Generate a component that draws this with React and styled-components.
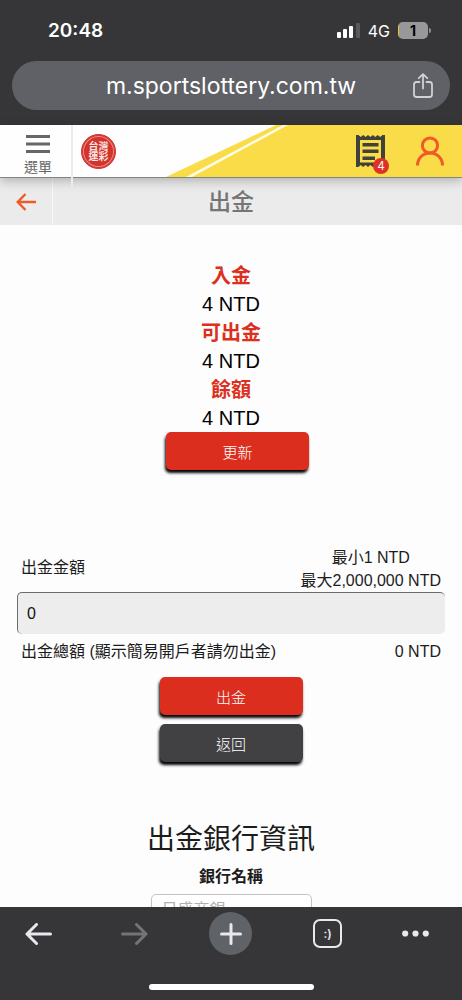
import React, { useState } from 'react';
import styled, { createGlobalStyle } from 'styled-components';

const GlobalStyle = createGlobalStyle`
  * {
    box-sizing: border-box;
  }
  body {
    margin: 0;
    background-color: #fdfdfd;
    font-family: 'Liberation Sans', 'Noto Sans CJK TC', sans-serif;
  }
  button,
  input {
    font-family: inherit;
  }
  svg {
    display: block;
  }
`;

const Screen = styled.div`
  display: flex;
  flex-direction: column;
  height: 100vh;
`;

/* browser chrome, top */

const BrowserTop = styled.header`
  flex-shrink: 0;
  padding: 0 12px 15px;
  background-color: #363638;
  color: #fff;
  font-family: Inter, sans-serif;
`;

const StatusBar = styled.div`
  display: flex;
  justify-content: space-between;
  align-items: center;
  height: 61px;
  padding: 0 19px 0 36px;
`;

const Clock = styled.time`
  font-size: 19px;
  font-weight: 600;
`;

const StatusIcons = styled.div`
  display: flex;
  align-items: center;
  gap: 8px;
  font-size: 16px;
`;

const Battery = styled.div`
  display: flex;
  align-items: center;
  gap: 1px;
  &::after {
    content: '';
    width: 2px;
    height: 5px;
    border-radius: 0 2px 2px 0;
    background-color: #8e8e90;
  }
`;

const BatteryLevel = styled.span`
  width: 30px;
  border-radius: 5px;
  background: linear-gradient(to right, #e8c93a 1px, #98989a 1px);
  color: #000;
  font-size: 14px;
  font-weight: 700;
  line-height: 17px;
  text-align: center;
`;

const AddressBar = styled.div`
  display: grid;
  grid-template-columns: 36px 1fr 36px;
  align-items: center;
  height: 49px;
  padding: 0 9px;
  border-radius: 25px;
  background-color: #5f6166;
`;

const Address = styled.span`
  grid-column: 2;
  font-size: 23px;
  line-height: 28px;
  text-align: center;
`;

const IconButton = styled.button`
  display: flex;
  justify-content: center;
  align-items: center;
  padding: 0;
  border: 0;
  background: none;
  color: inherit;
  cursor: pointer;
`;

/* site header */

const SiteHeader = styled.header`
  position: relative;
  z-index: 1;
  flex-shrink: 0;
  display: flex;
  align-items: center;
  height: 53px;
  border-bottom: 1px solid #85857f;
  background-color: #fefefe;
  box-shadow: 0 3px 10px rgba(0, 0, 0, 0.25);
`;

const Stripes = styled.svg`
  position: absolute;
  top: 0;
  right: 0;
  z-index: -1;
`;

const MenuButton = styled.button`
  display: flex;
  flex-direction: column;
  align-items: center;
  align-self: stretch;
  width: 73px;
  padding: 10px 0 0 3px;
  border: 0;
  background: none;
  color: #666;
  font-size: 14px;
  line-height: 20px;
  cursor: pointer;
  /* divider hangs a little below the header */
  &::after {
    content: '';
    position: absolute;
    top: 0;
    left: 71px;
    width: 2px;
    height: 62px;
    background-color: #ececec;
  }
`;

const MenuLabel = styled.span`
  margin-top: 4px;
`;

const LogoLink = styled.a`
  display: flex;
  justify-content: center;
  align-items: center;
  width: 35px;
  height: 35px;
  margin-left: 8px;
  border: 1px solid #d2332c;
  border-radius: 50%;
  background-color: #d2332c;
  box-shadow: inset 0 0 0 1px #d2332c, inset 0 0 0 2px #e98a84;
  color: #fbe6e3;
  text-decoration: none;
`;

const LogoText = styled.span`
  width: 20px;
  font-family: 'Noto Sans CJK TC', sans-serif;
  font-size: 10px;
  font-weight: 700;
  line-height: 10px;
  word-break: break-all;
`;

const HeaderActions = styled.div`
  display: flex;
  align-items: center;
  gap: 30px;
  margin-left: auto;
  padding-right: 17px;
`;

const BetSlip = styled(IconButton)`
  position: relative;
`;

const Badge = styled.span`
  position: absolute;
  right: -4px;
  bottom: -7px;
  width: 16px;
  height: 16px;
  border-radius: 50%;
  background-color: #de3226;
  color: #fff;
  font-size: 12px;
  line-height: 16px;
  text-align: center;
`;

const TitleBar = styled.div`
  flex-shrink: 0;
  display: grid;
  grid-template-columns: 53px 1fr 53px;
  align-items: stretch;
  height: 47px;
  background-color: #ebebeb;
`;

const BackButton = styled(IconButton)`
  border-right: 1px solid #f8f8f8;
  color: #f05a28;
`;

const PageTitle = styled.h1`
  margin: 0;
  color: #757575;
  font-size: 23px;
  font-weight: 500;
  line-height: 48px;
  text-align: center;
`;

/* page */

const Page = styled.main`
  flex: 1;
  min-height: 0;
  overflow-y: auto;
  scrollbar-width: none;
  padding: 36px 17px 0;
  color: #1c1c1c;
`;

const Balances = styled.dl`
  margin: 0;
  font-size: 20px;
  text-align: center;
`;

const BalanceName = styled.dt`
  color: #dc2f20;
  font-weight: 700;
  line-height: 31px;
`;

const BalanceValue = styled.dd`
  margin: 0;
  padding-bottom: 2px;
  color: #000;
  line-height: 24px;
`;

const Button = styled.button`
  width: 143px;
  height: 38px;
  padding: 0;
  border: 0;
  border-radius: 5px;
  background-color: ${(props) => (props.$dark ? '#414042' : '#dc2e1e')};
  box-shadow: -1px 3px 3px #000;
  color: #fff;
  font-size: 15px;
  font-weight: 300;
  cursor: pointer;
`;

const RefreshRow = styled.div`
  display: flex;
  justify-content: center;
  padding-left: 13px;
`;

const Form = styled.form`
  margin-top: 76px;
  font-size: 16px;
`;

const FormRow = styled.div`
  display: flex;
  justify-content: space-between;
  align-items: center;
  padding: 0 4px;
  line-height: 23px;
`;

const AmountLabel = styled.label`
  padding-bottom: 4px;
`;

const Limits = styled.div`
  text-align: center;
`;

const AmountInput = styled.input`
  display: block;
  width: 100%;
  height: 42px;
  margin: 0 0 6px;
  padding: 0 9px;
  border: solid #6b6b6b;
  border-width: 1px 0 0 1px;
  border-radius: 5px;
  background-color: #ededed;
  color: #111;
  font-size: 16px;
  outline: none;
`;

const FormActions = styled.div`
  display: flex;
  flex-direction: column;
  align-items: center;
  gap: 9px;
  margin-top: 14px;
`;

const BankInfo = styled.section`
  display: flex;
  flex-direction: column;
  align-items: center;
  margin-top: 58px;
`;

const BankTitle = styled.h2`
  margin: 0;
  font-size: 28px;
  font-weight: 400;
  line-height: 40px;
`;

const BankLabel = styled.label`
  margin: 5px 0;
  font-size: 16px;
  font-weight: 700;
  line-height: 24px;
`;

const BankInput = styled.input`
  flex-shrink: 0;
  width: 161px;
  height: 27px;
  padding: 0 10px;
  border: 1px solid #c4c4c4;
  border-radius: 5px;
  background-color: #fff;
  color: #b0b0b0;
  font-size: 16px;
`;

/* browser chrome, bottom */

const BrowserBottom = styled.footer`
  flex-shrink: 0;
  display: flex;
  flex-direction: column;
  justify-content: space-between;
  height: 93px;
  padding: 5px 0 10px;
  background-color: #363638;
  color: #e8e8ee;
`;

const Toolbar = styled.nav`
  display: grid;
  grid-template-columns: 86px repeat(3, 1fr) 86px;
  align-items: center;
`;

const ToolButton = styled(IconButton)`
  height: 43px;
  padding-right: ${(props) => props.$inset || 0}px;
  &:disabled {
    color: #747476;
    cursor: default;
  }
`;

const PlusCircle = styled.span`
  display: flex;
  justify-content: center;
  align-items: center;
  width: 43px;
  height: 43px;
  border-radius: 50%;
  background-color: #5f6367;
`;

const TabCount = styled.span`
  width: 29px;
  height: 29px;
  border: 2px solid currentColor;
  border-radius: 7px;
  font-family: Inter, sans-serif;
  font-size: 12px;
  font-weight: 600;
  line-height: 25px;
  text-align: center;
`;

const HomeIndicator = styled.div`
  align-self: center;
  width: 165px;
  height: 6px;
  border-radius: 3px;
  background-color: #fff;
`;

const SignalIcon = () => (
  <svg width="23" height="15" viewBox="0 0 23 15" fill="#fff" aria-hidden="true">
    <rect x="0" y="9" width="4" height="6" rx="1" />
    <rect x="6" y="6" width="4" height="9" rx="1" />
    <rect x="12" y="3" width="4" height="12" rx="1" />
    <rect x="19" y="0" width="4" height="15" rx="1" fill="#59595b" />
  </svg>
);

const ShareIcon = () => (
  <svg width="20" height="25" viewBox="0 0 20 25" fill="none" stroke="#d0d1d6" strokeWidth="1.8" strokeLinecap="round" strokeLinejoin="round">
    <path d="M6.5 9H3.5Q1 9 1 11.5V21.5Q1 24 3.5 24H16.5Q19 24 19 21.5V11.5Q19 9 16.5 9H13.5" />
    <path d="M10 15.5V1.5M5.8 5.2L10 1.2L14.2 5.2" />
  </svg>
);

const MenuIcon = () => (
  <svg width="24" height="18" viewBox="0 0 24 18" fill="#666">
    <rect width="24" height="3" />
    <rect y="7.5" width="24" height="3" />
    <rect y="15" width="24" height="3" />
  </svg>
);

const BetSlipIcon = () => (
  <svg width="29" height="32" viewBox="0 0 29 32">
    <path
      fill="#41413b"
      fillRule="evenodd"
      d="M0 0L2.4 0L4.8 2L7.2 0L9.6 2L12 0L14.4 2L16.9 0L19.3 2L21.7 0L24.1 2L26.5 0H29V32H26.5L24.1 30L21.7 32L19.3 30L16.9 32L14.4 30L12 32L9.6 30L7.2 32L4.8 30L2.4 32H0ZM4 5V27.5H25V5Z"
    />
    <path fill="#41413b" d="M6.5 8H22.5V11.5H6.5ZM6.5 14.5H22.5V18H6.5ZM6.5 21.5H19V25H6.5Z" />
  </svg>
);

const UserIcon = () => (
  <svg width="30" height="30" viewBox="0 0 30 30" fill="none" stroke="#f0592a" strokeWidth="3">
    <circle cx="15" cy="9.5" r="7.6" />
    <path d="M2.5 29.5C2.5 22 8 17.1 15 17.1S27.5 22 27.5 29.5" />
  </svg>
);

const BackIcon = () => (
  <svg width="20" height="18" viewBox="0 0 20 18" fill="none" stroke="currentColor" strokeWidth="2.4">
    <path d="M20 9H2M9.5 1L1.7 9L9.5 17" />
  </svg>
);

const ArrowIcon = ({ forward }) => (
  <svg width="27" height="22" viewBox="0 0 27 22" fill="none" stroke="currentColor" strokeWidth="3" strokeLinecap="round" strokeLinejoin="round">
    <path d={forward ? 'M1.5 11H25M15.5 1.5L25 11L15.5 20.5' : 'M25.5 11H2M11.5 1.5L2 11L11.5 20.5'} />
  </svg>
);

const PlusIcon = () => (
  <svg width="22" height="22" viewBox="0 0 22 22" stroke="currentColor" strokeWidth="3" strokeLinecap="round">
    <path d="M11 1.5V20.5M1.5 11H20.5" />
  </svg>
);

const DotsIcon = () => (
  <svg width="27" height="7" viewBox="0 0 27 7" fill="currentColor">
    <circle cx="3.2" cy="3.5" r="3.1" />
    <circle cx="13.5" cy="3.5" r="3.1" />
    <circle cx="23.8" cy="3.5" r="3.1" />
  </svg>
);

const balances = [
  { name: '入金', value: '4 NTD' },
  { name: '可出金', value: '4 NTD' },
  { name: '餘額', value: '4 NTD' },
];

export default function App() {
  const [amount, setAmount] = useState('0');

  return (
    <>
      <GlobalStyle />
      <Screen>
        <BrowserTop>
          <StatusBar>
            <Clock>20:48</Clock>
            <StatusIcons>
              <SignalIcon />
              <span>4G</span>
              <Battery>
                <BatteryLevel>1</BatteryLevel>
              </Battery>
            </StatusIcons>
          </StatusBar>
          <AddressBar>
            <Address>m.sportslottery.com.tw</Address>
            <IconButton aria-label="分享">
              <ShareIcon />
            </IconButton>
          </AddressBar>
        </BrowserTop>

        <SiteHeader>
          <Stripes width="296" height="52" viewBox="0 0 296 52" aria-hidden="true">
            <path fill="#f9dc47" d="M0 52L110 0H296V52Z" />
            <path fill="#fefbe4" d="M20 52L117 0H122L26 52Z" />
          </Stripes>
          <MenuButton>
            <MenuIcon />
            <MenuLabel>選單</MenuLabel>
          </MenuButton>
          <LogoLink href="#">
            <LogoText>台灣運彩</LogoText>
          </LogoLink>
          <HeaderActions>
            <BetSlip aria-label="投注單">
              <BetSlipIcon />
              <Badge>4</Badge>
            </BetSlip>
            <IconButton aria-label="會員">
              <UserIcon />
            </IconButton>
          </HeaderActions>
        </SiteHeader>

        <TitleBar>
          <BackButton aria-label="返回">
            <BackIcon />
          </BackButton>
          <PageTitle>出金</PageTitle>
        </TitleBar>

        <Page>
          <Balances>
            {balances.map((item) => (
              <React.Fragment key={item.name}>
                <BalanceName>{item.name}</BalanceName>
                <BalanceValue>{item.value}</BalanceValue>
              </React.Fragment>
            ))}
          </Balances>
          <RefreshRow>
            <Button type="button">更新</Button>
          </RefreshRow>

          <Form onSubmit={(e) => e.preventDefault()}>
            <FormRow>
              <AmountLabel htmlFor="amount">出金金額</AmountLabel>
              <Limits>
                <div>最小1 NTD</div>
                <div>最大2,000,000 NTD</div>
              </Limits>
            </FormRow>
            <AmountInput
              id="amount"
              inputMode="numeric"
              value={amount}
              onChange={(e) => setAmount(e.target.value)}
            />
            <FormRow>
              <span>出金總額 (顯示簡易開戶者請勿出金)</span>
              <span>0 NTD</span>
            </FormRow>
            <FormActions>
              <Button type="submit">出金</Button>
              <Button type="button" $dark>返回</Button>
            </FormActions>
          </Form>

          <BankInfo>
            <BankTitle>出金銀行資訊</BankTitle>
            <BankLabel htmlFor="bank">銀行名稱</BankLabel>
            <BankInput id="bank" value="日盛商銀" readOnly />
          </BankInfo>
        </Page>

        <BrowserBottom>
          <Toolbar>
            <ToolButton aria-label="上一頁" $inset={10}>
              <ArrowIcon />
            </ToolButton>
            <ToolButton aria-label="下一頁" disabled>
              <ArrowIcon forward />
            </ToolButton>
            <ToolButton aria-label="新分頁">
              <PlusCircle>
                <PlusIcon />
              </PlusCircle>
            </ToolButton>
            <ToolButton aria-label="分頁">
              <TabCount>:)</TabCount>
            </ToolButton>
            <ToolButton aria-label="更多" $inset={6}>
              <DotsIcon />
            </ToolButton>
          </Toolbar>
          <HomeIndicator />
        </BrowserBottom>
      </Screen>
    </>
  );
}
